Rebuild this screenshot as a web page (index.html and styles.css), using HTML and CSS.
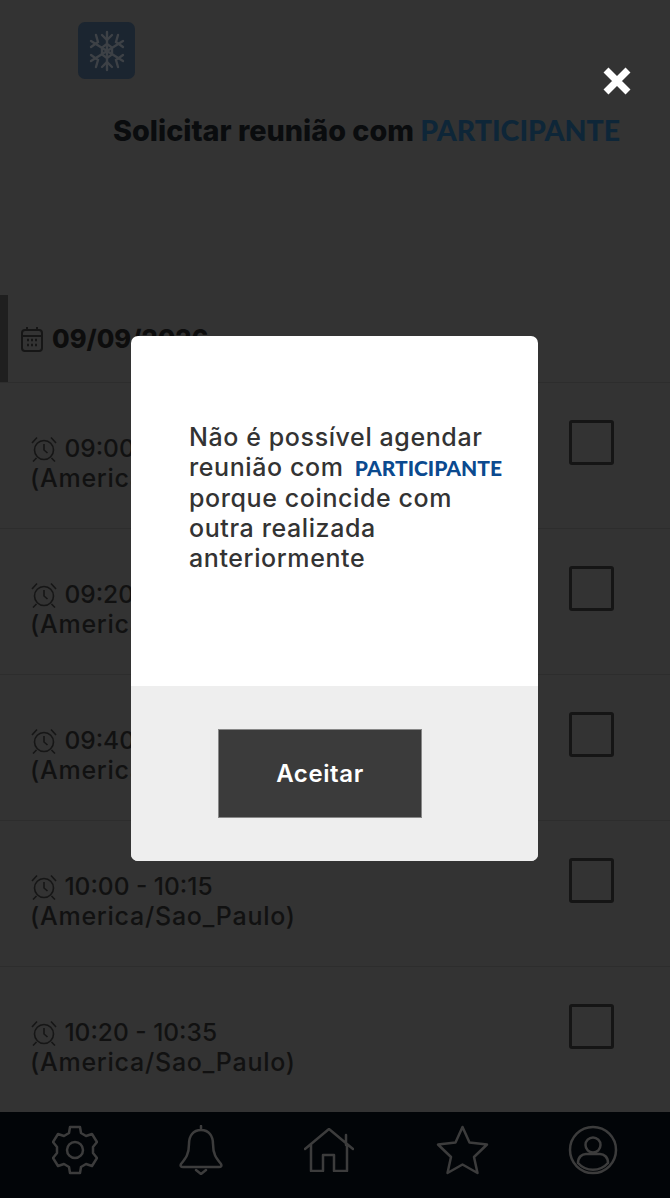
FILE: index.html
```html
<!DOCTYPE html>
<html lang="pt">

<head>
    <meta charset="utf-8">
    <title>Solicitar reunião</title>
    <link rel="stylesheet" href="styles.css">
</head>

<body>
<div class="app">
    <header class="top">
        <div class="top-row">
            <div class="logo">
                <svg viewBox="0 0 40 44" width="40" height="44" fill="none" stroke="#3d4146" stroke-width="2.4" stroke-linecap="round">
                    <path d="M20 3V41M4 12L36 32M36 12L4 32"/>
                    <path d="M15 6l5 5 5-5M15 38l5-5 5 5M4 18l7-5-2-7M36 18l-7-5 2-7M4 26l7 5-2 7M36 26l-7 5 2 7"/>
                    <path d="M20 15l5 3.500v7l-5 3.500-5-3.500v-7z"/>
                </svg>
            </div>
            <svg class="close" viewBox="0 0 28 28" width="28" height="28" fill="none" stroke="#fff" stroke-width="7">
                <path d="M3 3L25 25M25 3L3 25"/>
            </svg>
        </div>
        <h1 class="title">Solicitar reunião com <span class="name">PARTICIPANTE</span></h1>
    </header>

    <div class="day">
        <svg viewBox="0 0 24 26" width="24" height="26" fill="none" stroke="#161616" stroke-width="2">
            <rect x="2" y="4" width="20" height="21" rx="3"/>
            <path d="M2 10H22M7 1V5M17 1V5"/>
            <path d="M7 14h2M11 14h2M15 14h2M7 19h2M11 19h2M15 19h2" stroke-width="2.500"/>
        </svg>
        <span>09/09/2026</span>
    </div>

    <ul class="slots">
        <li class="slot">
            <div class="slot-text">
                <svg class="alarm" viewBox="0 0 26 26" width="26" height="26"><use href="#alarm"/></svg>
                <span class="hour">09:00 - 09:15</span><br>(America/Sao_Paulo)
            </div>
            <span class="check"></span>
        </li>
        <li class="slot">
            <div class="slot-text">
                <svg class="alarm" viewBox="0 0 26 26" width="26" height="26"><use href="#alarm"/></svg>
                <span class="hour">09:20 - 09:35</span><br>(America/Sao_Paulo)
            </div>
            <span class="check"></span>
        </li>
        <li class="slot">
            <div class="slot-text">
                <svg class="alarm" viewBox="0 0 26 26" width="26" height="26"><use href="#alarm"/></svg>
                <span class="hour">09:40 - 09:55</span><br>(America/Sao_Paulo)
            </div>
            <span class="check"></span>
        </li>
        <li class="slot">
            <div class="slot-text">
                <svg class="alarm" viewBox="0 0 26 26" width="26" height="26"><use href="#alarm"/></svg>
                <span class="hour">10:00 - 10:15</span><br>(America/Sao_Paulo)
            </div>
            <span class="check"></span>
        </li>
        <li class="slot">
            <div class="slot-text">
                <svg class="alarm" viewBox="0 0 26 26" width="26" height="26"><use href="#alarm"/></svg>
                <span class="hour">10:20 - 10:35</span><br>(America/Sao_Paulo)
            </div>
            <span class="check"></span>
        </li>
    </ul>

    <nav class="tabs">
        <svg viewBox="0 0 46 50" width="46" height="50"><circle cx="23" cy="25" r="8"/><path d="M18 2h10l1 6 5 3 6-2 5 8-4 5v6l4 5-5 8-6-2-5 3-1 6H18l-1-6-5-3-6 2-5-8 4-5v-6l-4-5 5-8 6 2 5-3z"/></svg>
        <svg viewBox="0 0 44 50" width="44" height="50"><path d="M22 1V5M22 5c-8 0-12 6-12 14 0 10-3 14-8 20-1 2 0 3 2 3H40c2 0 3-1 2-3-5-6-8-10-8-20 0-8-4-14-12-14zM17 45l5 4 5-4"/></svg>
        <svg viewBox="0 0 50 44" width="50" height="44"><path d="M1 21L25 1 49 21M42 7V17M7 17V43H19V27H30V43H43V17"/></svg>
        <svg class="tab-star" viewBox="0 0 53 50" width="53" height="50"><path d="M26.500 2l7 15.500 17.500 2-13 12.500 3.500 16-15-8.500-15 8.500 3.500-16L2 19.500l17.500-2z"/></svg>
        <svg viewBox="0 0 50 50" width="50" height="50"><circle cx="25" cy="25" r="23"/><circle cx="25" cy="20" r="7.500"/><path d="M10 38c0-6 4-9 8-9h14c4 0 8 3 8 9M10 38c8 9 22 9 30 0"/></svg>
    </nav>
</div>

<div class="modal">
    <div class="modal-body">
        Não é possível agendar<br>
        reunião com <span class="modal-name">PARTICIPANTE</span><br>
        porque coincide com<br>
        outra realizada<br>
        anteriormente
    </div>
    <div class="modal-foot">
        <button class="accept">Aceitar</button>
    </div>
</div>

<svg class="defs" width="0" height="0">
    <symbol id="alarm" viewBox="0 0 26 26">
        <g fill="none" stroke="#161616" stroke-width="1.600">
            <circle cx="13" cy="14" r="9.500"/>
            <path d="M13 8V14l3.500 3M1 7l5-5.500M25 7l-5-5.500M5.500 22l-3.500 3.500M20.500 22l3.500 3.500"/>
        </g>
    </symbol>
</svg>
</body>

</html>
```
FILE: styles.css
```css
* {
    box-sizing: border-box;
}

html, body {
    margin: 0;
    height: 100%;
}

body {
    position: relative;
    overflow: hidden;
    background: #333;
    font-family: "Inter", "Liberation Sans", sans-serif;
}

.app {
    display: flex;
    flex-direction: column;
    height: 1198px;
}

.defs {
    position: absolute;
}

/* header */
.top {
    height: 295px;
    padding: 22px 39px 0 78px;
}

.top-row {
    display: flex;
    justify-content: space-between;
    align-items: flex-start;
}

.logo {
    display: flex;
    align-items: center;
    justify-content: center;
    width: 57px;
    height: 57px;
    border-radius: 7px;
    background: #1b2530;
}

.close {
    margin-top: 45px;
}

.title {
    margin: 18px 0 0 35px;
    font-size: 28.800px;
    font-weight: 800;
    line-height: 34px;
    color: #0a0c0e;
    white-space: nowrap;
}

.name {
    font-family: "Lato", sans-serif;
    font-size: 28.500px;
    font-weight: 900;
    color: #0e2638;
}

/* date row */
.day {
    display: flex;
    align-items: center;
    gap: 8px;
    height: 87px;
    padding-left: 12px;
    border-left: 8px solid #1f1f1f;
    font-size: 25.500px;
    font-weight: 800;
    color: #0d0d0d;
}

/* time slots */
.slots {
    flex: 1;
    margin: 0;
    padding: 0;
    list-style: none;
}

.slot {
    display: flex;
    justify-content: space-between;
    height: 146px;
    padding: 50px 56px 0 30px;
    border-top: 1px solid #2d2d2d;
}

.slot-text {
    font-size: 25px;
    font-weight: 500;
    line-height: 30px;
    letter-spacing: 0.75px;
    color: #111;
}

.hour {
    font-size: 24.500px;
    letter-spacing: 0;
}

.alarm {
    margin-left: 1px;
    vertical-align: -5px;
}

.check {
    width: 45px;
    height: 45px;
    margin-top: -13px;
    border: 3px solid #151515;
    border-radius: 3px;
}

/* bottom navigation */
.tabs {
    display: flex;
    justify-content: space-between;
    align-items: center;
    height: 86px;
    padding: 0 52px 10px;
    background: #020508;
}

.tabs svg {
    fill: none;
    stroke: #3c3c3c;
    stroke-width: 2.500;
    stroke-linejoin: round;
    stroke-linecap: round;
}

.tabs .tab-star {
    margin: 0 -2px 0 2px;
}

/* dialog */
.modal {
    position: absolute;
    top: 336px;
    left: 131px;
    width: 407px;
    height: 525px;
    border-radius: 7px;
    overflow: hidden;
    background: #fff;
}

.modal-body {
    height: 350px;
    padding: 86px 0 0 58px;
    font-size: 25px;
    font-weight: 500;
    line-height: 30px;
    letter-spacing: 0.6px;
    white-space: nowrap;
    color: #333;
}

.modal-name {
    margin-left: 4px;
    font-family: "Lato", sans-serif;
    font-size: 21px;
    font-weight: 900;
    letter-spacing: 0;
    color: #0b4a8f;
}

.modal-foot {
    display: flex;
    justify-content: flex-start;
    height: 175px;
    padding: 43px 0 0 87px;
    background: #eee;
}

.accept {
    width: 204px;
    height: 89px;
    border: 1px solid #888;
    background: #3b3b3b;
    color: #fff;
    font-family: "Inter", sans-serif;
    font-size: 24px;
    font-weight: 600;
    letter-spacing: 0.6px;
}
```
